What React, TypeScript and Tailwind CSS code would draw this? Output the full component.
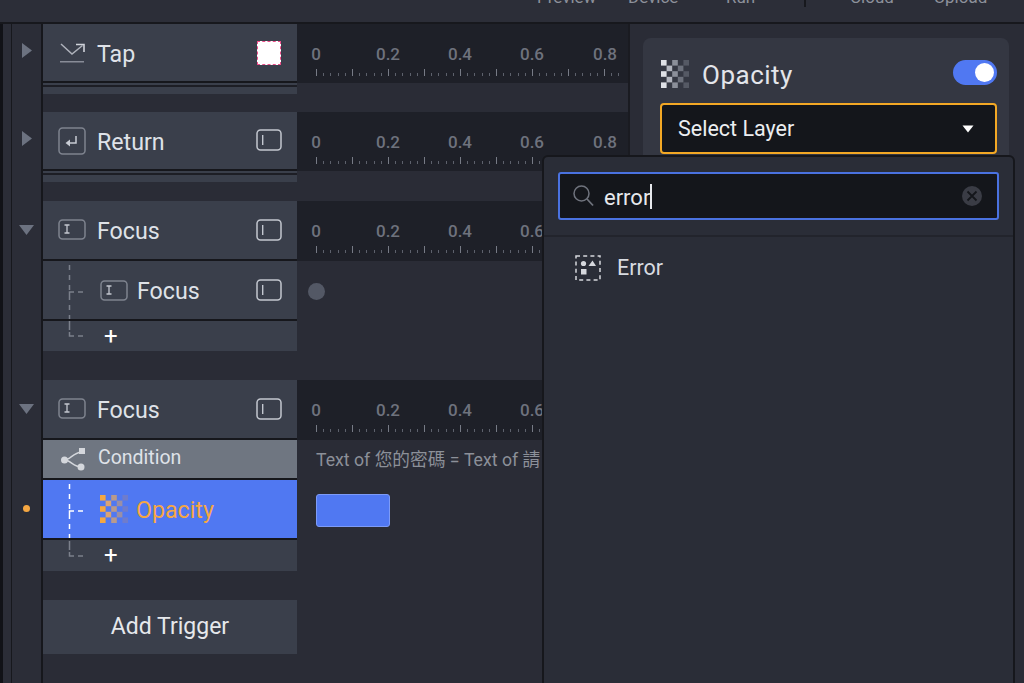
import React from "react";

const FONT = "[font-family:Roboto,'Noto_Sans_CJK_TC',sans-serif]";

function Ruler() {
  const majors = Array.from({ length: 9 }, (_, i) => 19 + i * 36);
  const minors: number[] = [];
  for (let x = 19; x < 326; x += 7.2) minors.push(x);
  return (
    <div className="flex flex-col pt-[19px]">
      <div className="flex h-[22px] items-center text-[17px] font-medium leading-none text-[#6e727d]">
        <span className="ml-[-17px] w-[72px] shrink-0 text-center">0</span>
        <span className="w-[72px] shrink-0 text-center">0.2</span>
        <span className="w-[72px] shrink-0 text-center">0.4</span>
        <span className="w-[72px] shrink-0 text-center">0.6</span>
        <span className="ml-[1px] w-[72px] shrink-0 text-center">0.8</span>
      </div>
      <svg width="331" height="8" className="mt-[4px] block">
        {minors.map((x) => (
          <rect key={x} x={Math.round(x)} y="4" width="1" height="3" fill="#5d616c" />
        ))}
        {majors.map((x) => (
          <rect key={x} x={x} y="0" width="1" height="7" fill="#777b86" />
        ))}
      </svg>
    </div>
  );
}

function Gutter({ children }: { children?: React.ReactNode }) {
  return (
    <div className="flex h-full w-[31px] shrink-0 items-center justify-center border-r-2 border-[#16171c] bg-[#2b2d37]">
      {children}
    </div>
  );
}

function ArrowRight() {
  return (
    <svg width="10" height="15" className="mb-[6px] ml-[1px]">
      <path d="M0 0 L10 7.5 L0 15 Z" fill="#6c7280" />
    </svg>
  );
}
function ArrowDown() {
  return (
    <svg width="15" height="10" className="mb-[2px]">
      <path d="M0 0 H15 L7.5 10 Z" fill="#6c7280" />
    </svg>
  );
}

function TextBox() {
  return (
    <svg width="26" height="22" className="mb-[1px] shrink-0">
      <rect x="1" y="1" width="24" height="20" rx="3.5" fill="none" stroke="#c3c7cf" strokeWidth="1.5" />
      <rect x="6" y="6" width="1.4" height="10" fill="#c3c7cf" />
    </svg>
  );
}

function FieldIcon({ up = false }: { up?: boolean }) {
  return (
    <svg width="28" height="21" className={up ? "mb-[2px] shrink-0" : "shrink-0"}>
      <rect x="1" y="1" width="26" height="19" rx="3.5" fill="none" stroke="#7f848f" strokeWidth="1.5" />
      <path d="M6.5 6 H11.5 M6.5 14 H11.5 M9 6 V14" stroke="#c3c7cf" strokeWidth="1.3" fill="none" />
    </svg>
  );
}

function ReturnIcon() {
  return (
    <svg width="28" height="28" className="shrink-0">
      <rect x="1" y="1" width="26" height="26" rx="3.5" fill="none" stroke="#7f848f" strokeWidth="1.5" />
      <path d="M18 9 V16 H11" fill="none" stroke="#c8ccd4" strokeWidth="1.5" />
      <path d="M7.5 16 L12 12.5 V19.5 Z" fill="#c8ccd4" />
    </svg>
  );
}

function TapIcon() {
  return (
    <svg width="26" height="20" className="ml-[2px] shrink-0">
      <path d="M1 1 L12 11 L22.5 2.5" fill="none" stroke="#aeb2bb" strokeWidth="1.5" />
      <path d="M16 1.5 H24 V9" fill="none" stroke="#d0d3da" strokeWidth="1.6" />
      <rect x="0" y="18" width="24" height="1.5" fill="#888c97" />
    </svg>
  );
}

function Checker({ colors, size = 5.6 }: { colors: string[]; size?: number }) {
  const cells: React.ReactNode[] = [];
  for (let r = 0; r < 5; r++) {
    for (let c = 0; c < 5; c++) {
      if ((r + c) % 2 === 0) {
        cells.push(<rect key={`${r}-${c}`} x={c * size} y={r * size} width={size} height={size} fill={colors[c]} />);
      }
    }
  }
  return (
    <svg width={size * 5} height={size * 5} className="shrink-0">
      {cells}
    </svg>
  );
}

function Tree({ last, color = "#7b808b" }: { last?: boolean; color?: string }) {
  return last ? (
    <svg width="57" height="30" className="shrink-0">
      <path d="M26.5 0 V9 M26.5 11 V15 H31 M35 15 H40" fill="none" stroke={color} strokeWidth="1.5" />
    </svg>
  ) : (
    <svg width="57" height="58" className="shrink-0">
      <path d="M26.5 4 V58" fill="none" stroke={color} strokeWidth="1.5" strokeDasharray="5 5" />
      <path d="M26.5 34 V31 H31 M35 31 H40" fill="none" stroke={color} strokeWidth="1.5" />
    </svg>
  );
}

function PlusRow({ h = "h-[30px]" }: { h?: string }) {
  return (
    <div className={`flex ${h}`}>
      <Gutter />
      <div className="flex w-[254px] items-center bg-[#3a3f4b]">
        <Tree last />
        <span className="ml-[4px] mt-[-1px] text-[24px] font-normal leading-none text-white">+</span>
      </div>
    </div>
  );
}

function Spacer({ h }: { h: string }) {
  return (
    <div className={`flex ${h}`}>
      <Gutter />
    </div>
  );
}

function Strip() {
  return (
    <div className="flex h-[11px]">
      <Gutter />
      <div className="w-[254px] border-t-[2px] border-[#3a3f4b] bg-[#3a3f4b]">
        <div className="h-[2px] bg-[#1d1e25]" />
      </div>
    </div>
  );
}

function Track({
  h,
  gutter,
  icon,
  label,
  trailing = <TextBox />,
}: {
  h: string;
  gutter: React.ReactNode;
  icon: React.ReactNode;
  label: string;
  trailing?: React.ReactNode;
}) {
  return (
    <div className={`flex ${h}`}>
      <Gutter>{gutter}</Gutter>
      <div className="flex w-[254px] items-center border-b-2 border-[#16171c] bg-[#3a3f4b] pl-[15px] pr-[15px]">
        <div className="flex w-[39px] items-center">{icon}</div>
        <span className="mt-[4px] text-[23.2px] leading-none text-[#dfe2e8]">{label}</span>
        <div className="ml-auto">{trailing}</div>
      </div>
      <div className="w-[331px] bg-[#1e2028]">
        <Ruler />
      </div>
    </div>
  );
}

function Timeline() {
  return (
    <div className="flex min-w-0 flex-col">
      <Track h="h-[59px]" gutter={<ArrowRight />} icon={<TapIcon />} label="Tap"
        trailing={<div className="mr-[1px] h-[24px] w-[24px] border border-dashed border-[#ec4f8b] bg-white" />} />
      <Strip />
      <Spacer h="h-[18px]" />
      <Track h="h-[59px]" gutter={<ArrowRight />} icon={<ReturnIcon />} label="Return" />
      <Strip />
      <Spacer h="h-[19px]" />
      <Track h="h-[60px]" gutter={<ArrowDown />} icon={<FieldIcon up />} label="Focus" />
      <div className="flex h-[60px]">
        <Gutter />
        <div className="flex w-[254px] items-center border-b-2 border-[#16171c] bg-[#3a3f4b] pr-[15px]">
          <Tree />
          <FieldIcon />
          <span className="ml-[9px] mt-[4px] text-[23.2px] leading-none text-[#dfe2e8]">Focus</span>
          <div className="ml-auto">
            <TextBox />
          </div>
        </div>
        <div className="flex w-[331px] items-center pl-[11px]">
          <div className="h-[17px] w-[17px] rounded-full bg-[#535865]" />
        </div>
      </div>
      <PlusRow />
      <Spacer h="h-[29px]" />
      <Track h="h-[60px]" gutter={<ArrowDown />} icon={<FieldIcon up />} label="Focus" />
      <div className="flex h-[40px]">
        <Gutter />
        <div className="flex w-[254px] items-center border-b-2 border-[#16171c] bg-[#6f7681] pl-[17px]">
          <svg width="25" height="23" className="mr-[13px] shrink-0">
            <path d="M5 12 C10 12 14 4 22 4 M5 12 C10 12 14 19 21 19" fill="none" stroke="#d4d7dc" strokeWidth="1.5" />
            <circle cx="4.5" cy="12" r="3.5" fill="#d4d7dc" />
            <rect x="19" y="0" width="6" height="6" fill="#d4d7dc" />
            <circle cx="21" cy="19" r="3.5" fill="#d4d7dc" />
          </svg>
          <span className="mb-[2px] text-[19.5px] leading-none text-[#dfe2e8]">Condition</span>
        </div>
        <div className="flex w-[331px] items-center overflow-hidden whitespace-nowrap pl-[19px] pt-[1px] text-[17.7px] leading-none text-[#8c9099]">
          Text of 您的密碼 = Text of 請
        </div>
      </div>
      <div className="flex h-[60px]">
        <Gutter>
          <div className="mb-[4px] h-[7px] w-[7px] rounded-full bg-[#f5a742]" />
        </Gutter>
        <div className="flex w-[254px] items-center border-b-2 border-[#16171c] bg-[#5078f2] pr-[15px]">
          <Tree color="#ffffff" />
          <Checker colors={["#f5a742", "#d9a374", "#b89a8c", "#9a8fa6", "#6f7ccc"]} />
          <span className="ml-[8px] mt-[4px] text-[23.2px] leading-none text-[#f5a742]">Opacity</span>
        </div>
        <div className="flex w-[331px] items-center pl-[19px]">
          <div className="h-[33px] w-[74px] rounded-[3px] border border-[#7d9bf7] bg-[#5078f2]" />
        </div>
      </div>
      <PlusRow h="h-[31px]" />
      <Spacer h="h-[29px]" />
      <div className="flex h-[54px]">
        <Gutter />
        <div className="flex w-[254px] items-center justify-center bg-[#3a3f4b] pb-[2px] text-[23px] leading-none text-[#e6e8ec]">
          Add Trigger
        </div>
      </div>
      <div className="flex min-h-0 flex-1">
        <Gutter />
      </div>
    </div>
  );
}

function Popover() {
  return (
    <div className="absolute left-[542px] top-[155px] h-[540px] w-[473px] rounded-t-[6px] border-2 border-[#16171c] bg-[#2a2d37]">
      <div className="h-[80px] border-b-2 border-[#22242c] px-[14px] pt-[15px]">
        <div className="flex h-[48px] items-center rounded-[3px] border-2 border-[#4a72e0] bg-[#14161b] pl-[13px] pr-[15px]">
          <svg width="21" height="22" className="shrink-0">
            <circle cx="8.5" cy="8.5" r="7.5" fill="none" stroke="#6f737d" strokeWidth="1.5" />
            <path d="M14 14 L20 20.5" stroke="#6f737d" strokeWidth="1.8" />
          </svg>
          <span className="ml-[10px] mt-[3px] text-[22px] leading-none text-[#e6e8ec]">error</span>
          <span className="mt-[1px] h-[25px] w-[1.5px] bg-[#e6e8ec]" />
          <svg width="20" height="20" className="ml-auto shrink-0">
            <circle cx="10" cy="10" r="10" fill="#3a3c45" />
            <path d="M5.5 5.5 L14.5 14.5 M14.5 5.5 L5.5 14.5" stroke="#14161b" strokeWidth="1.8" />
          </svg>
        </div>
      </div>
      <div className="flex items-center pl-[31px] pt-[18px]">
        <svg width="26" height="26" className="shrink-0">
          <rect x="1" y="1" width="24" height="24" fill="none" stroke="#d6d8dd" strokeWidth="1.5" strokeDasharray="4 3.2" />
          <circle cx="8.5" cy="8.5" r="2.6" fill="#d6d8dd" />
          <path d="M13.5 11 L17.5 5.5 L21 11 Z" fill="#d6d8dd" />
          <rect x="6" y="14" width="5.5" height="5.5" fill="#d6d8dd" />
        </svg>
        <span className="ml-[16px] text-[21.5px] leading-none text-[#d8dbe0]">Error</span>
      </div>
    </div>
  );
}

function Inspector() {
  return (
    <div className="min-w-0 flex-1 border-l-2 border-[#1a1b21] pl-[13px] pr-[15px] pt-[14px]">
      <div className="h-[700px] rounded-t-[8px] bg-[#343742] pl-[17px] pr-[12px] pt-[22px]">
        <div className="flex h-[28px] items-center">
          <div className="ml-[1px]">
            <Checker colors={["#dfe1e6", "#b3b6bf", "#8b8f99", "#6d717c", "#555964"]} />
          </div>
          <span className="ml-[13px] mt-[2px] text-[26px] leading-none tracking-[0.5px] text-[#e3e5ea]">Opacity</span>
          <div className="mb-[3px] ml-auto flex h-[25px] w-[44px] items-center justify-end rounded-full bg-[#5078f2] pr-[3px]">
            <div className="h-[19px] w-[19px] rounded-full bg-white" />
          </div>
        </div>
        <div className="mt-[15px] flex h-[51px] items-center rounded-[4px] border-2 border-[#f3a825] bg-[#14161b] pl-[16px] pr-[21px]">
          <span className="text-[21.5px] leading-none text-[#eceef1]">Select Layer</span>
          <svg width="12" height="8" className="ml-auto">
            <path d="M0.5 0.5 H11.5 L6 7.5 Z" fill="#ffffff" />
          </svg>
        </div>
      </div>
    </div>
  );
}

export default function App() {
  return (
    <div className={`relative flex h-[683px] w-[1024px] flex-col overflow-hidden bg-[#2a2c36] ${FONT}`}>
      <div className="flex h-[24px] shrink-0 items-start border-b-2 border-[#17181d] bg-[#2c2e38] pl-[537px] text-[17px] leading-none text-[#8d919b]">
        <span className="mt-[-11px] w-[91px]">Preview</span>
        <span className="mt-[-11px] w-[98px]">Device</span>
        <span className="mt-[-11px] w-[78px]">Run</span>
        <span className="h-[7px] w-[46px] border-l-2 border-[#17181d]" />
        <span className="mt-[-11px] w-[84px]">Cloud</span>
        <span className="mt-[-11px]">Upload</span>
      </div>
      <div className="flex min-h-0 flex-1">
        <div className="w-[3px] shrink-0 bg-[#111217]" />
        <div className="w-[9px] shrink-0 border-r border-[#17181d] bg-[#2b2d37]" />
        <Timeline />
        <Inspector />
      </div>
      <Popover />
    </div>
  );
}
